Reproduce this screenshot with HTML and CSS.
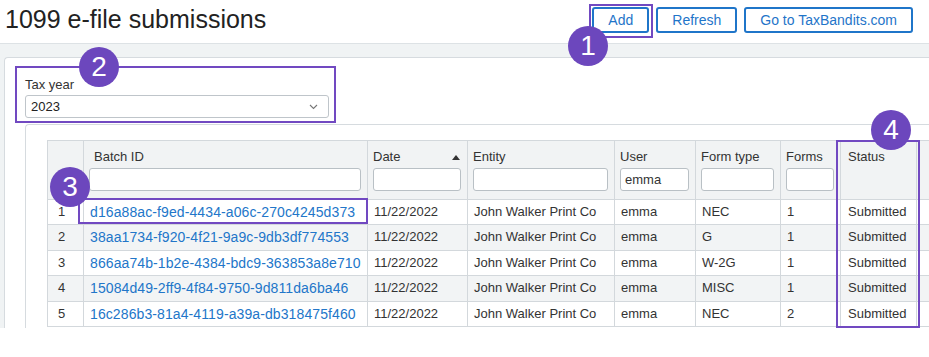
FILE: index.html
```html
<!DOCTYPE html>
<html lang="en">
<head>
    <meta charset="UTF-8">
    <meta name="viewport" content="width=device-width, initial-scale=1.0">
    <title>1099 e-file submissions</title>
    <link rel="stylesheet" href="styles.css">
</head>
<body>

<div class="topbar">
    <h1>1099 e-file submissions</h1>
    <div class="actions">
        <button class="btn">Add</button>
        <button class="btn">Refresh</button>
        <button class="btn">Go to TaxBandits.com</button>
    </div>
</div>

<div class="page">
    <div class="panel">
        <label class="field-label">Tax year</label>
        <div class="select">
            <span>2023</span>
            <svg width="9" height="6" viewBox="0 0 9 6"><path d="M1 1l3.5 3.5L8 1" fill="none" stroke="#777" stroke-width="1.1"/></svg>
        </div>

        <div class="grid-box">
            <table class="grid">
                <colgroup>
                    <col style="width:36px">
                    <col style="width:284px">
                    <col style="width:100px">
                    <col style="width:147px">
                    <col style="width:81px">
                    <col style="width:85px">
                    <col style="width:60px">
                    <col style="width:76px">
                    <col style="width:100px">
                </colgroup>
                <thead>
                    <tr>
                        <th></th>
                        <th><div class="th-label pad">Batch ID</div><input class="filter" type="text"></th>
                        <th><div class="th-label">Date <span class="sort-up"></span></div><input class="filter" type="text"></th>
                        <th><div class="th-label">Entity</div><input class="filter" type="text"></th>
                        <th><div class="th-label">User</div><input class="filter" type="text" value="emma"></th>
                        <th><div class="th-label">Form type</div><input class="filter" type="text"></th>
                        <th><div class="th-label">Forms</div><input class="filter" type="text"></th>
                        <th class="status"><div class="th-label">Status</div></th>
                        <th></th>
                    </tr>
                </thead>
                <tbody>
                    <tr>
                        <td class="num">1</td>
                        <td><a href="#">d16a88ac-f9ed-4434-a06c-270c4245d373</a></td>
                        <td>11/22/2022</td>
                        <td>John Walker Print Co</td>
                        <td>emma</td>
                        <td>NEC</td>
                        <td>1</td>
                        <td class="status">Submitted</td>
                        <td></td>
                    </tr>
                    <tr>
                        <td class="num">2</td>
                        <td><a href="#">38aa1734-f920-4f21-9a9c-9db3df774553</a></td>
                        <td>11/22/2022</td>
                        <td>John Walker Print Co</td>
                        <td>emma</td>
                        <td>G</td>
                        <td>1</td>
                        <td class="status">Submitted</td>
                        <td></td>
                    </tr>
                    <tr>
                        <td class="num">3</td>
                        <td><a href="#">866aa74b-1b2e-4384-bdc9-363853a8e710</a></td>
                        <td>11/22/2022</td>
                        <td>John Walker Print Co</td>
                        <td>emma</td>
                        <td>W-2G</td>
                        <td>1</td>
                        <td class="status">Submitted</td>
                        <td></td>
                    </tr>
                    <tr>
                        <td class="num">4</td>
                        <td><a href="#">15084d49-2ff9-4f84-9750-9d811da6ba46</a></td>
                        <td>11/22/2022</td>
                        <td>John Walker Print Co</td>
                        <td>emma</td>
                        <td>MISC</td>
                        <td>1</td>
                        <td class="status">Submitted</td>
                        <td></td>
                    </tr>
                    <tr>
                        <td class="num">5</td>
                        <td><a href="#">16c286b3-81a4-4119-a39a-db318475f460</a></td>
                        <td>11/22/2022</td>
                        <td>John Walker Print Co</td>
                        <td>emma</td>
                        <td>NEC</td>
                        <td>2</td>
                        <td class="status">Submitted</td>
                        <td></td>
                    </tr>
                </tbody>
            </table>
        </div>
    </div>
</div>

<!-- numbered callouts drawn over the screen -->
<div class="mark box-1"></div>
<div class="mark box-2"></div>
<div class="mark box-3"></div>
<div class="mark box-4"></div>
<div class="badge badge-1">1</div>
<div class="badge badge-2">2</div>
<div class="badge badge-3">3</div>
<div class="badge badge-4">4</div>

</body>
</html>
```

FILE: styles.css
```css
body {
    margin: 0;
    font-family: "Liberation Sans", Arial, sans-serif;
    background: #ffffff;
    color: #333333;
    overflow: hidden;
}

.topbar {
    display: flex;
    justify-content: space-between;
    align-items: flex-start;
    height: 43px;
    border-bottom: 1px solid #dde2e5;
}

h1 {
    margin: 0;
    padding: 5px 0 0 5px;
    font-size: 25px;
    font-weight: normal;
    color: #222222;
}

.actions {
    display: flex;
    gap: 7px;
    margin: 7px 16px 0 0;
}

.btn {
    height: 26px;
    padding: 0 14px;
    border: 2px solid #1f75c9;
    border-radius: 3px;
    background: #ffffff;
    color: #1f75c9;
    font-family: "Liberation Sans", Arial, sans-serif;
    font-size: 14px;
    cursor: pointer;
}

.page {
    height: 284px;
    overflow: hidden;
    background: #f0f3f4;
    padding: 13px 0 0 4px;
    box-sizing: border-box;
}

.panel {
    background: #ffffff;
    border: 1px solid #d6dbdf;
    border-right: none;
    border-radius: 4px 0 0 0;
    padding: 17px 0 0 20px;
    height: 100%;
}

.field-label {
    display: block;
    font-size: 13px;
    line-height: 20px;
}

.select {
    display: flex;
    justify-content: space-between;
    align-items: center;
    width: 304px;
    height: 23px;
    box-sizing: border-box;
    padding: 0 10px 0 5px;
    border: 1px solid #bfc5ca;
    border-radius: 3px;
    font-size: 13px;
    color: #222222;
}

.grid-box {
    margin-top: 6px;
    border-top: 1px solid #d6dbdf;
    border-left: 1px solid #d6dbdf;
    border-radius: 4px 0 0 0;
    padding: 15px 0 0 21px;
    height: 100%;
}

.grid {
    border-collapse: collapse;
    table-layout: fixed;
    width: 969px;
    font-size: 13px;
}

.grid th,
.grid td {
    border: 1px solid #d3d8dc;
    padding: 4px 6px 4.4px 6px;
    line-height: 16px;
    height: 16px;
    text-align: left;
    white-space: nowrap;
    overflow: hidden;
}

.grid th {
    background: #f1f3f4;
    font-weight: normal;
    vertical-align: top;
    padding: 6px 6px 8px 5px;
}

.th-label {
    display: flex;
    justify-content: space-between;
    align-items: center;
    line-height: 20px;
    margin-bottom: 1px;
}

.th-label.pad {
    padding-left: 5px;
}

.sort-up {
    width: 0;
    height: 0;
    margin-right: 1px;
    border-left: 4px solid transparent;
    border-right: 4px solid transparent;
    border-bottom: 5px solid #333333;
}

.filter {
    display: block;
    width: 100%;
    height: 23px;
    box-sizing: border-box;
    margin: 0;
    padding: 0 4px;
    border: 1px solid #b9c0c5;
    border-radius: 3px;
    background: #ffffff;
    font-family: "Liberation Sans", Arial, sans-serif;
    font-size: 13px;
    color: #333333;
}

.grid tbody tr:nth-child(even) td {
    background: #f2f4f5;
}

.grid td.num {
    padding-left: 10px;
}

.grid .status {
    padding-left: 7px;
}

.grid a {
    display: inline-block;
    vertical-align: top;
    line-height: 16px;
    color: #2276c9;
    font-size: 14px;
    letter-spacing: 0.1px;
    text-decoration: none;
}

.mark {
    position: absolute;
    border: 2px solid #7149c1;
    box-sizing: border-box;
}

.box-1 { left: 589px; top: 4px; width: 64px; height: 34px; }
.box-2 { left: 15px; top: 66px; width: 321px; height: 57px; }
.box-3 { left: 78px; top: 198px; width: 290px; height: 26px; }
.box-4 { left: 836px; top: 140px; width: 84px; height: 188px; }

.badge {
    position: absolute;
    width: 40px;
    height: 40px;
    border-radius: 50%;
    background: #6c47bd;
    color: #ffffff;
    font-size: 28px;
    line-height: 40px;
    text-align: center;
}

.badge-1 { left: 568px; top: 26px; }
.badge-2 { left: 79px; top: 47px; }
.badge-3 { left: 50px; top: 167px; }
.badge-4 { left: 871px; top: 110px; }
```
